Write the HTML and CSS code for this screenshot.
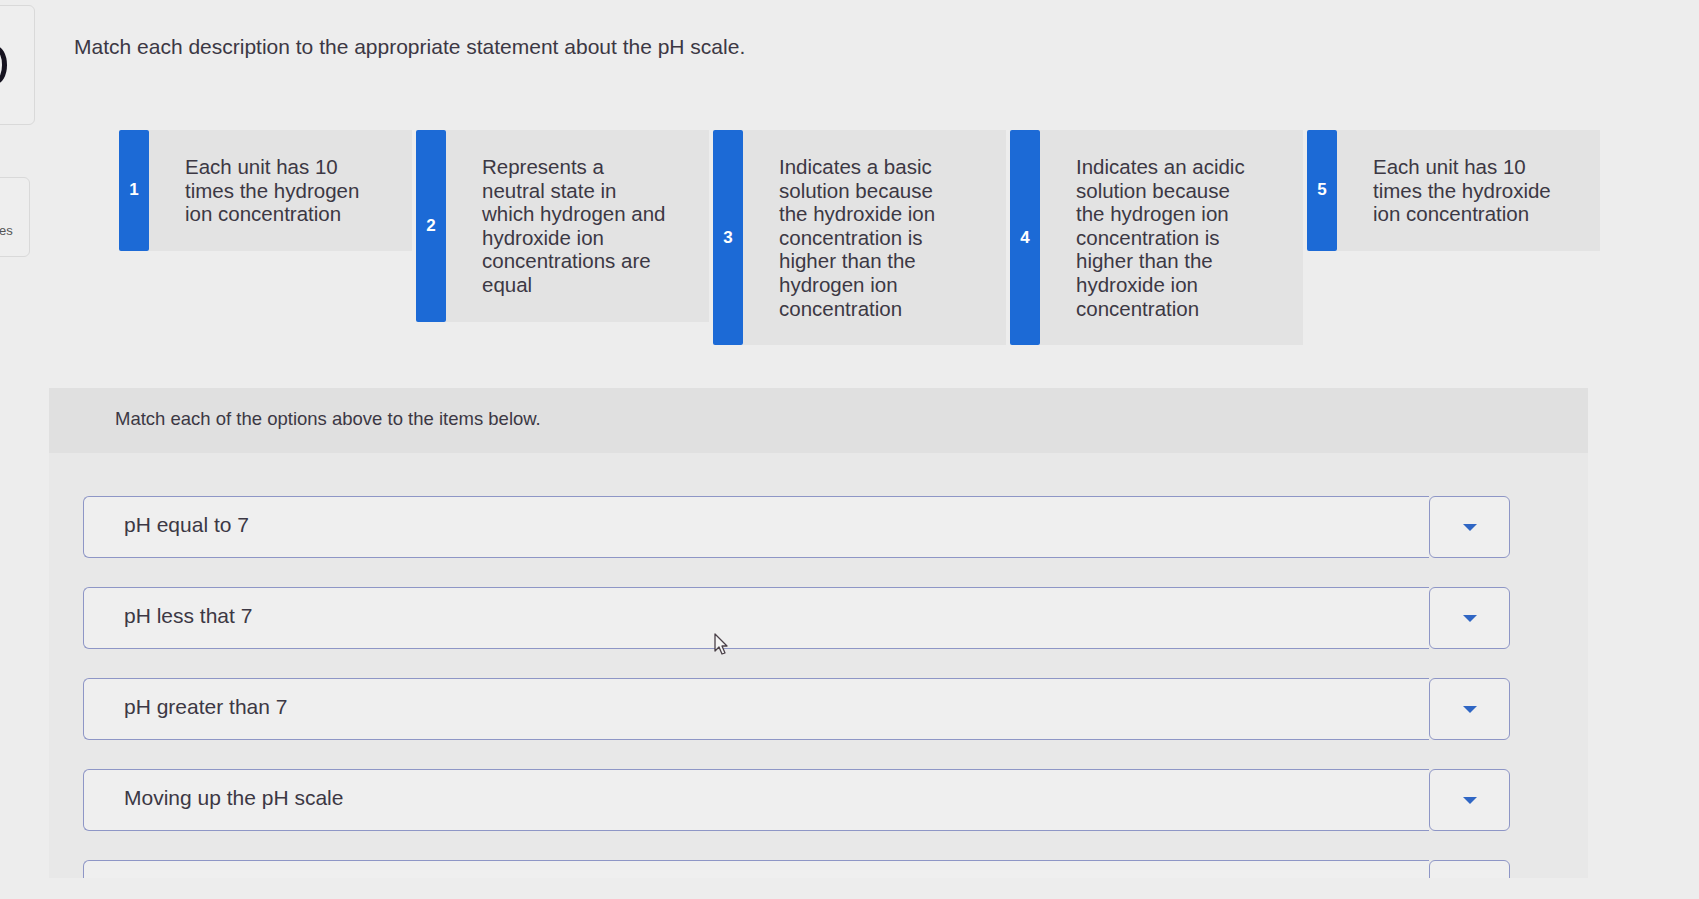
FILE: index.html
```html
<!DOCTYPE html>
<html lang="en">
<head>
    <meta charset="UTF-8">
    <meta name="viewport" content="width=device-width, initial-scale=1.0">
    <title>Matching</title>
    <link rel="stylesheet" href="styles.css">
</head>
<body>

    <div class="page">
        <div class="side">
            <div class="side-tab tab-top"><span class="ring"></span></div>
            <div class="side-tab tab-low"><span class="tab-text">es</span></div>
        </div>

        <div class="main">
            <p class="prompt">Match each description to the appropriate statement about the pH scale.</p>

            <div class="choices">
                <div class="choice">
                    <div class="choice-num">1</div>
                    <div class="choice-text">Each unit has 10<br>times the hydrogen<br>ion concentration</div>
                </div>
                <div class="choice">
                    <div class="choice-num">2</div>
                    <div class="choice-text">Represents a<br>neutral state in<br>which hydrogen and<br>hydroxide ion<br>concentrations are<br>equal</div>
                </div>
                <div class="choice">
                    <div class="choice-num">3</div>
                    <div class="choice-text">Indicates a basic<br>solution because<br>the hydroxide ion<br>concentration is<br>higher than the<br>hydrogen ion<br>concentration</div>
                </div>
                <div class="choice">
                    <div class="choice-num">4</div>
                    <div class="choice-text">Indicates an acidic<br>solution because<br>the hydrogen ion<br>concentration is<br>higher than the<br>hydroxide ion<br>concentration</div>
                </div>
                <div class="choice">
                    <div class="choice-num">5</div>
                    <div class="choice-text">Each unit has 10<br>times the hydroxide<br>ion concentration</div>
                </div>
            </div>

            <div class="match-panel">
                <div class="match-head">Match each of the options above to the items below.</div>
                <div class="match-list">
                    <div class="match-row">
                        <div class="match-label">pH equal to 7</div>
                        <button class="match-select"><span class="caret"></span></button>
                    </div>
                    <div class="match-row">
                        <div class="match-label">pH less that 7</div>
                        <button class="match-select"><span class="caret"></span></button>
                    </div>
                    <div class="match-row">
                        <div class="match-label">pH greater than 7</div>
                        <button class="match-select"><span class="caret"></span></button>
                    </div>
                    <div class="match-row">
                        <div class="match-label">Moving up the pH scale</div>
                        <button class="match-select"><span class="caret"></span></button>
                    </div>
                    <div class="match-row">
                        <div class="match-label"></div>
                        <button class="match-select"><span class="caret"></span></button>
                    </div>
                </div>
            </div>
        </div>
    </div>

    <svg class="pointer" width="16" height="24" viewBox="0 0 16 24">
        <path d="M1 1 L1 18 L5 14 L8 21 L11 20 L8 13 L13 13 Z" fill="#f4f4f4" stroke="#4a4048" stroke-width="1.3" stroke-linejoin="round"/>
    </svg>

</body>
</html>
```

FILE: styles.css
```css
body {
    margin: 0;
    background-color: #ededed;
    font-family: "Liberation Sans", Arial, sans-serif;
    color: #3c3844;
    overflow: hidden;
}
.page {
    display: flex;
    height: 899px;
}
.side {
    width: 45px;
    flex-shrink: 0;
    display: flex;
    flex-direction: column;
    align-items: flex-start;
    gap: 52px;
    padding-top: 5px;
    margin-left: -10px;
}
.side-tab {
    position: relative;
    box-sizing: border-box;
    border: 1px solid #d9d9d9;
    border-radius: 6px;
    background-color: #eeeeee;
    overflow: hidden;
}
.tab-top {
    width: 45px;
    height: 120px;
}
.tab-low {
    width: 40px;
    height: 80px;
}
.ring {
    position: absolute;
    left: -6px;
    top: 40px;
    width: 12px;
    height: 28px;
    border: 5px solid #161320;
    border-radius: 50%;
}
.tab-text {
    position: absolute;
    left: 8px;
    top: 45px;
    font-size: 13px;
    color: #555;
}
.main {
    flex: 1;
}
.prompt {
    margin: 34px 0 0 39px;
    font-size: 21px;
    line-height: 26px;
}
.choices {
    display: flex;
    align-items: flex-start;
    gap: 4px;
    margin: 70px 0 0 84px;
}
.choice {
    display: flex;
    width: 293px;
}
.choice-num {
    width: 30px;
    flex-shrink: 0;
    background-color: #1c6ad6;
    color: white;
    border-radius: 2px;
    font-weight: 700;
    font-size: 17px;
    display: flex;
    align-items: center;
    justify-content: center;
}
.choice-text {
    flex: 1;
    background-color: #e3e3e3;
    padding: 25px 10px 25px 36px;
    font-size: 20.5px;
    line-height: 23.6px;
    white-space: nowrap;
}
.match-panel {
    margin: 43px 0 0 14px;
    width: 1539px;
    height: 490px;
    background-color: #e8e8e8;
    overflow: hidden;
}
.match-head {
    background-color: #e0e0e0;
    height: 65px;
    box-sizing: border-box;
    padding: 19px 66px;
    font-size: 18.5px;
    line-height: 24px;
}
.match-list {
    display: flex;
    flex-direction: column;
    gap: 29px;
    padding: 43px 78px 0 34px;
}
.match-row {
    display: flex;
    height: 62px;
}
.match-label {
    flex: 1;
    display: flex;
    align-items: center;
    background-color: #efefef;
    border: 1.5px solid #8e96c6;
    border-right: none;
    border-radius: 6px 0 0 6px;
    padding: 0 40px 4px;
    font-size: 21px;
}
.match-select {
    width: 81px;
    background-color: #efefef;
    border: 1.5px solid #8e96c6;
    border-radius: 6px;
    display: flex;
    align-items: center;
    justify-content: center;
    padding: 0;
}
.caret {
    width: 0;
    height: 0;
    border-left: 7px solid transparent;
    border-right: 7px solid transparent;
    border-top: 7px solid #2f66c4;
}
.pointer {
    position: absolute;
    left: 714px;
    top: 633px;
}
```
